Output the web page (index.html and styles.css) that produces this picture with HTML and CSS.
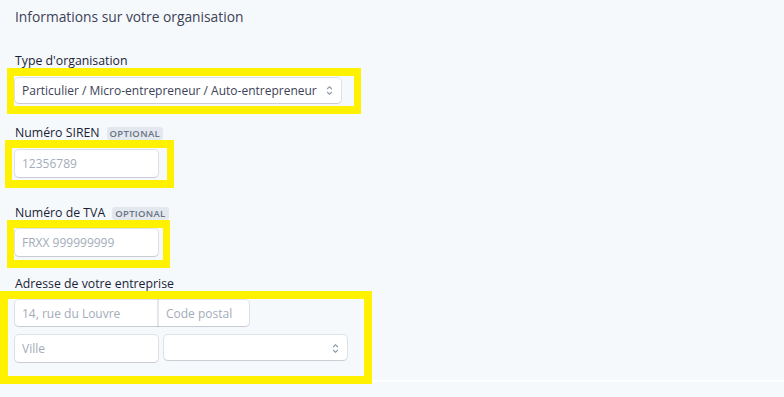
FILE: index.html
```html
<!DOCTYPE html>
<html lang="fr">
<head>
  <meta charset="UTF-8">
  <meta name="viewport" content="width=device-width, initial-scale=1.0">
  <title>Informations sur votre organisation</title>
  <link rel="stylesheet" href="styles.css">
</head>
<body>
  <div class="panel">
    <h2 class="title">Informations sur votre organisation</h2>

    <div class="field">
      <label class="label">Type d'organisation</label>
      <div class="mark mark-type">
        <div class="select-wrap select-type">
          <select class="select">
            <option>Particulier / Micro-entrepreneur / Auto-entrepreneur</option>
          </select>
          <svg class="chevrons" width="7" height="11" viewBox="0 0 7 11">
            <path d="M1.2 4 L3.5 1.7 L5.8 4 M1.2 7 L3.5 9.3 L5.8 7" fill="none" stroke="#8792a2" stroke-width="1.1"/>
          </svg>
        </div>
      </div>
    </div>

    <div class="field">
      <label class="label">Numéro SIREN <span class="badge">OPTIONAL</span></label>
      <div class="mark mark-siren">
        <input class="input input-short" type="text" placeholder="12356789">
      </div>
    </div>

    <div class="field">
      <label class="label">Numéro de TVA <span class="badge">OPTIONAL</span></label>
      <div class="mark mark-tva">
        <input class="input input-short" type="text" placeholder="FRXX 999999999">
      </div>
    </div>

    <div class="field">
      <label class="label">Adresse de votre entreprise</label>
      <div class="mark mark-address">
        <div class="row group">
          <input class="input street" type="text" placeholder="14, rue du Louvre">
          <input class="input postal" type="text" placeholder="Code postal">
        </div>
        <div class="row">
          <input class="input input-short" type="text" placeholder="Ville">
          <div class="select-wrap select-country">
            <select class="select">
              <option></option>
            </select>
            <svg class="chevrons" width="7" height="11" viewBox="0 0 7 11">
              <path d="M1.2 4 L3.5 1.7 L5.8 4 M1.2 7 L3.5 9.3 L5.8 7" fill="none" stroke="#8792a2" stroke-width="1.1"/>
            </svg>
          </div>
        </div>
      </div>
    </div>
  </div>
  <div class="divider"></div>
</body>
</html>
```

FILE: styles.css
```css
body {
  margin: 0;
  font-family: "Open Sans", "Noto Sans", Arial, sans-serif;
  background-color: #f6f9fc;
  color: #1a1f36;
  height: 397px;
  overflow: hidden;
}

.panel {
  padding: 7px 0 0 15px;
}

.title {
  margin: 0 0 25px;
  font-size: 13.8px;
  font-weight: 400;
  line-height: 20px;
  color: #3c4257;
}

.field {
  display: flex;
  flex-direction: column;
  align-items: flex-start;
}

.label {
  display: flex;
  align-items: center;
  gap: 7px;
  font-size: 12.3px;
  line-height: 18px;
  color: #1a1f36;
  margin-bottom: -2px;
}

.badge {
  font-size: 9.5px;
  font-weight: 600;
  letter-spacing: 0.3px;
  color: #697386;
  background: #e3e8ee;
  border-radius: 3px;
  padding: 0 3px;
  line-height: 13px;
}

.mark {
  border: 8px solid #fff100;
  border-left-width: 7px;
  border-right-width: 7px;
}

.mark-type {
  margin-left: -8px;
  padding: 2px 13px 3px 1px;
  margin-bottom: 10px;
}

.mark-siren {
  margin-left: -10px;
  padding: 2px 9px 3px 3px;
  margin-bottom: 16px;
}

.mark-tva {
  margin-left: -8px;
  padding: 1px 5px 4px 1px;
  margin-bottom: 7px;
}

.mark-address {
  margin-left: -15px;
  border-width: 8px;
  padding: 1px 17px 14px 7px;
  display: flex;
  flex-direction: column;
  gap: 9px;
}

.input,
.select {
  box-sizing: border-box;
  height: 26px;
  border: none;
  border-radius: 4px;
  background: #ffffff;
  box-shadow: 0 0 0 1px rgba(60, 66, 87, 0.12), 0 1px 1px rgba(0, 0, 0, 0.1);
  font-family: inherit;
  font-size: 12px;
  color: #1a1f36;
  padding: 0 7px;
  outline: none;
  margin: 0;
}

.input::placeholder {
  color: #a3acb9;
}

.input-short {
  width: 143px;
  height: 27px;
}

.row {
  display: flex;
  gap: 6px;
}

.group {
  gap: 0;
}

.street {
  width: 143px;
  border-radius: 4px 0 0 4px;
}

.postal {
  width: 91px;
  border-radius: 0 4px 4px 0;
  border-left: 1px solid #e3e8ee;
}

.select-wrap {
  position: relative;
}

.select {
  appearance: none;
  -webkit-appearance: none;
  width: 100%;
}

.select-type {
  width: 326px;
}

.select-type .select {
  height: 25px;
  color: #3c4257;
}

.select-country {
  width: 183px;
}

.select-country .select {
  height: 25px;
}

.chevrons {
  position: absolute;
  right: 8px;
  top: 50%;
  margin-top: -5.5px;
  pointer-events: none;
}

.divider {
  position: absolute;
  left: 0;
  right: 0;
  top: 380px;
  height: 2px;
  background: #fdfeff;
  z-index: -1;
}
```
